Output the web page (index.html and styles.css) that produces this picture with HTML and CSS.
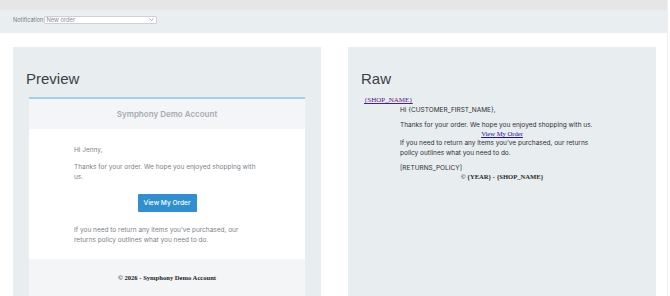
FILE: index.html
```html
<!DOCTYPE html>
<html lang="en">
<head>
  <meta charset="UTF-8">
  <meta name="viewport" content="width=device-width, initial-scale=1.0">
  <title>Notification preview</title>
  <link rel="stylesheet" href="styles.css">
</head>
<body>
  <div class="topstrip"></div>
  <div class="toolbar">
    <label for="notif">Notification</label>
    <div class="select">
      <select id="notif">
        <option>New order</option>
      </select>
      <svg class="chev" width="5" height="3" viewBox="0 0 5 3"><path d="M0.5 0.5 L2.5 2.5 L4.5 0.5" fill="none" stroke="#8a8e92" stroke-width="0.7"/></svg>
    </div>
  </div>

  <div class="main">
    <div class="panel">
      <h2>Preview</h2>
      <div class="email">
        <div class="email-head">Symphony Demo Account</div>
        <div class="email-body">
          <p>Hi Jenny,</p>
          <p>Thanks for your order. We hope you enjoyed shopping with us.</p>
          <div class="btn-row"><a class="btn" href="javascript:;">View My Order</a></div>
          <p>If you need to return any items you’ve purchased, our returns policy outlines what you need to do.</p>
        </div>
        <div class="email-foot">© 2026 - Symphony Demo Account</div>
      </div>
    </div>

    <div class="panel">
      <h2>Raw</h2>
      <a class="raw-shop" href="javascript:;">{SHOP_NAME}</a>
      <div class="raw">
        <p>Hi {CUSTOMER_FIRST_NAME},</p>
        <p class="tight">Thanks for your order. We hope you enjoyed shopping with us.</p>
        <div class="raw-link"><a href="javascript:;">View My Order</a></div>
        <p>If you need to return any items you’ve purchased, our returns policy outlines what you need to do.</p>
        <p class="tight">[RETURNS_POLICY]</p>
        <div class="raw-foot">© {YEAR} - {SHOP_NAME}</div>
      </div>
    </div>
  </div>
</body>
</html>
```

FILE: styles.css
```css
* {
  margin: 0;
  padding: 0;
  box-sizing: border-box;
}
body {
  font-family: Inter, "Noto Sans", sans-serif;
  background: #fff;
  width: 668px;
  border-right: 1px solid #eceef0;
  min-height: 296px;
}
.topstrip {
  height: 10px;
  background-color: #e7e6e6;
}
.toolbar {
  height: 23px;
  background-color: #e9eef1;
  display: flex;
  align-items: center;
  padding: 0 0 4px 13px;
  gap: 1px;
  font-size: 5.6px;
  color: #7a7e82;
}
.select {
  position: relative;
  width: 113px;
  height: 8px;
}
.select select {
  appearance: none;
  -webkit-appearance: none;
  display: block;
  width: 100%;
  height: 8px;
  font-size: 5.8px;
  line-height: 6px;
  font-family: Inter, sans-serif;
  color: #8a8e92;
  border: 1px solid #cdd1d4;
  border-radius: 1px;
  background: #fff;
  padding: 0 0 0 1px;
}
.chev {
  position: absolute;
  right: 3px;
  top: 2.5px;
}
.main {
  display: flex;
  gap: 27px;
  padding: 14px 0 0 13px;
}
.panel {
  width: 308px;
  height: 260px;
  background-color: #e8edf0;
  padding: 22px 16px 0 16px;
  overflow: hidden;
}
.panel h2 {
  font-family: "Liberation Sans", Arial, sans-serif;
  font-weight: normal;
  font-size: 15px;
  line-height: 19px;
  color: #3b3f44;
  margin: 0 0 9px -3px;
}
.email {
  width: 276px;
  border-top: 2px solid #a3cfea;
}
.email-head {
  height: 30px;
  background-color: #f3f5f7;
  display: flex;
  align-items: center;
  justify-content: center;
  font-size: 8px;
  font-weight: 600;
  color: #a8acb0;
}
.email-body {
  background: #fff;
  padding: 16px 45px 15px 45px;
  font-size: 6.5px;
  line-height: 10px;
  color: #7d8287;
  height: 130px;
}
.email-body p {
  margin-bottom: 7px;
}
.btn-row {
  display: flex;
  justify-content: center;
  margin: 12px 0 13px 0;
}
.btn {
  display: inline-block;
  width: 59px;
  height: 18px;
  line-height: 18px;
  text-align: center;
  background-color: #2f8fd0;
  color: #fff;
  text-decoration: none;
  font-size: 6.6px;
  font-weight: 500;
  border-radius: 1px;
}
.email-foot {
  height: 40px;
  background-color: #f3f5f7;
  display: flex;
  justify-content: center;
  padding-top: 15px;
  font-family: "Liberation Serif", "Times New Roman", serif;
  font-weight: bold;
  font-size: 6.6px;
  color: #222;
}
.raw-shop {
  display: block;
  margin-top: -1px;
  font-family: "Liberation Serif", "Times New Roman", serif;
  font-size: 7px;
  line-height: 9px;
  color: #551a8b;
}
.raw {
  width: 204px;
  margin-left: 36px;
  font-size: 6.5px;
  line-height: 10px;
  color: #2d3034;
}
.raw p {
  margin-bottom: 5px;
}
.raw p.tight {
  margin-bottom: 0;
}
.raw-link {
  text-align: center;
  font-family: "Liberation Serif", "Times New Roman", serif;
  font-size: 6.6px;
  line-height: 8px;
}
.raw-link a {
  color: #1a0dab;
}
.raw-foot {
  text-align: center;
  font-family: "Liberation Serif", "Times New Roman", serif;
  font-weight: bold;
  font-size: 6.6px;
  line-height: 8px;
  color: #2a2a2a;
}
```
